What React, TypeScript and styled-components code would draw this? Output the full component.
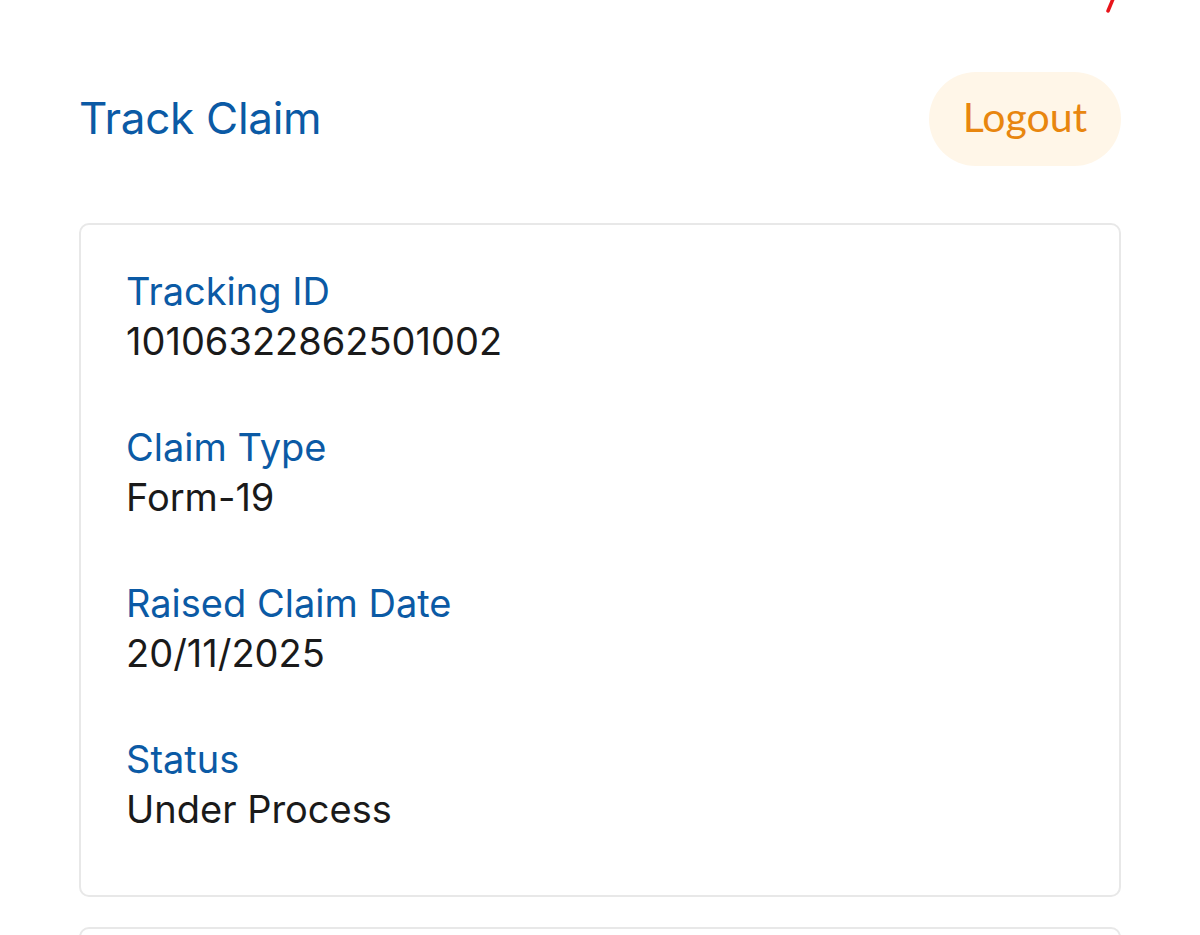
import styled, { createGlobalStyle } from "styled-components";

const GlobalStyle = createGlobalStyle`
  body {
    margin: 0;
    background: #ffffff;
    font-family: Inter, "Noto Sans", sans-serif;
  }
`;

const Page = styled.div`
  width: 1200px;
  height: 935px;
  overflow: hidden;
  padding: 0 79px;
  box-sizing: border-box;
`;

const TopStrip = styled.div`
  height: 14px;
  display: flex;
  justify-content: flex-end;
  padding-right: 6px;
`;

const Header = styled.header`
  display: flex;
  justify-content: space-between;
  align-items: center;
  margin-top: 58px;
  height: 94px;
`;

const Title = styled.h1`
  margin: 0;
  font-size: 44px;
  font-weight: 400;
  color: #0b5aa5;
  letter-spacing: -0.3px;
  margin-top: -3px;
`;

const LogoutButton = styled.button`
  width: 192px;
  height: 94px;
  padding: 0 0 6px;
  border: none;
  border-radius: 47px;
  background: #fff6e8;
  color: #e8860f;
  font-family: Lato, "Open Sans", sans-serif;
  font-size: 41px;
  cursor: pointer;
`;

const Card = styled.div`
  margin-top: 57px;
  border: 2px solid #e8e8e8;
  border-radius: 10px;
  padding: 41px 45px 0;
  height: 674px;
  box-sizing: border-box;
  display: flex;
  flex-direction: column;
  gap: 56px;
`;

const NextCard = styled(Card)`
  margin-top: 30px;
  height: 100px;
`;

const Field = styled.div`
  display: flex;
  flex-direction: column;
`;

const Label = styled.span`
  font-size: 38px;
  line-height: 50px;
  color: #0b5aa5;
`;

const Value = styled.span`
  font-size: 38px;
  line-height: 50px;
  color: #1a1a1a;
`;

const fields = [
  { label: "Tracking ID", value: "10106322862501002" },
  { label: "Claim Type", value: "Form-19" },
  { label: "Raised Claim Date", value: "20/11/2025" },
  { label: "Status", value: "Under Process" },
];

export default function App() {
  return (
    <>
      <GlobalStyle />
      <Page>
        <TopStrip>
          <svg width="12" height="14" viewBox="0 0 12 14">
            <path d="M10 -1 L5 11" stroke="#e8141a" strokeWidth="3.5" strokeLinecap="round" />
          </svg>
        </TopStrip>
        <Header>
          <Title>Track Claim</Title>
          <LogoutButton>Logout</LogoutButton>
        </Header>
        <Card>
          {fields.map((f) => (
            <Field key={f.label}>
              <Label>{f.label}</Label>
              <Value>{f.value}</Value>
            </Field>
          ))}
        </Card>
        <NextCard />
      </Page>
    </>
  );
}
